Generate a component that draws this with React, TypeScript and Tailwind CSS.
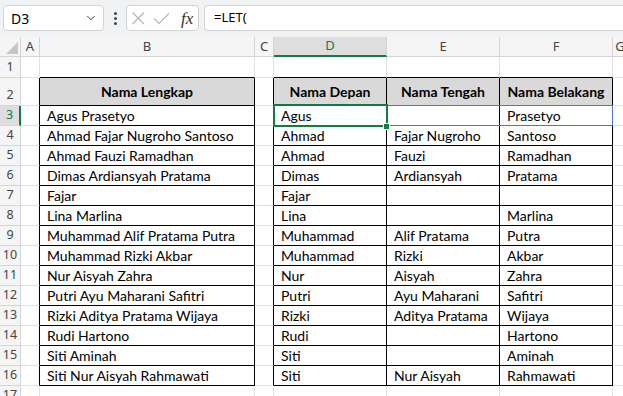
import { ChevronDown } from "lucide-react";

const names = [
  ["Agus Prasetyo", "Agus", "", "Prasetyo"],
  ["Ahmad Fajar Nugroho Santoso", "Ahmad", "Fajar Nugroho", "Santoso"],
  ["Ahmad Fauzi Ramadhan", "Ahmad", "Fauzi", "Ramadhan"],
  ["Dimas Ardiansyah Pratama", "Dimas", "Ardiansyah", "Pratama"],
  ["Fajar", "Fajar", "", ""],
  ["Lina Marlina", "Lina", "", "Marlina"],
  ["Muhammad Alif Pratama Putra", "Muhammad", "Alif Pratama", "Putra"],
  ["Muhammad Rizki Akbar", "Muhammad", "Rizki", "Akbar"],
  ["Nur Aisyah Zahra", "Nur", "Aisyah", "Zahra"],
  ["Putri Ayu Maharani Safitri", "Putri", "Ayu Maharani", "Safitri"],
  ["Rizki Aditya Pratama Wijaya", "Rizki", "Aditya Pratama", "Wijaya"],
  ["Rudi Hartono", "Rudi", "", "Hartono"],
  ["Siti Aminah", "Siti", "", "Aminah"],
  ["Siti Nur Aisyah Rahmawati", "Siti", "Nur Aisyah", "Rahmawati"],
];

const cols = ["A", "B", "C", "D", "E", "F", "G"];

const RowHead = ({ n, active }: { n: number; active?: boolean }) => (
  <div
    className={
      "flex items-end justify-center border-b border-[#d5d5d5] text-[12.5px] leading-none " +
      (active
        ? "bg-[#dedede] text-[#107c41] border-r-2 border-r-[#107c41]"
        : "bg-[#f5f5f5] text-[#444] border-r border-r-[#d5d5d5]")
    }
    style={{ fontFamily: "'Noto Sans', sans-serif" }}
  >
    <span className="pb-[4px]">{n}</span>
  </div>
);

const Cell = ({ children, black, left, center, bold, head }: any) => (
  <div
    className={
      "flex items-center px-[7px] whitespace-nowrap overflow-visible border-r border-b " +
      (black ? "border-black " : "border-[#e1e1e1] ") +
      (left ? "!border-r-black " : "") +
      (center ? "justify-center " : "") +
      (bold ? "font-bold " : "") +
      (head ? "bg-[#d9d9d9] " : "bg-white ")
    }
  >
    {children}
  </div>
);

export default function App() {
  return (
    <div
      className="w-[623px] h-[396px] overflow-hidden bg-white text-black"
      style={{ fontFamily: "Lato, 'Noto Sans', sans-serif" }}
    >
      {/* formula bar */}
      <div className="h-[37px] bg-[#f0f2f4] flex items-start pt-[5px] pl-[3px]">
        <div className="w-[101px] h-[26px] bg-white border border-[#d3d3d3] rounded-[4px] flex items-center justify-between pl-[7px] pr-[5px]">
          <span className="text-[14px]" style={{ fontFamily: "'Noto Sans', sans-serif" }}>D3</span>
          <ChevronDown size={14} strokeWidth={1.5} className="text-[#333]" />
        </div>
        <div className="w-[22px] h-[26px] flex flex-col items-center justify-center gap-[2px]">
          <span className="w-[3px] h-[3px] rounded-full bg-[#444]" />
          <span className="w-[3px] h-[3px] rounded-full bg-[#444]" />
          <span className="w-[3px] h-[3px] rounded-full bg-[#444]" />
        </div>
        <div className="w-[73px] h-[26px] bg-white border border-[#d3d3d3] rounded-[4px] flex items-center">
          <svg width="48" height="24" viewBox="0 0 48 24" className="shrink-0">
            <path d="M5.5 6.5 L17 18 M17 6.5 L5.5 18" stroke="#b5b5b5" strokeWidth="1.1" fill="none" />
            <path d="M27 12.5 L32 17.5 L42 7.5" stroke="#b5b5b5" strokeWidth="1.1" fill="none" />
          </svg>
          <span className="italic text-[17px] text-[#333] ml-[6px] leading-none" style={{ fontFamily: "'Liberation Serif', serif" }}>
            fx
          </span>
        </div>
        <div className="ml-[5px] flex-1 h-[26px] bg-white border border-[#d3d3d3] rounded-l-[4px] border-r-0 flex items-center pl-[9px]">
          <span className="text-[13px]" style={{ fontFamily: "'Noto Sans', sans-serif" }}>=LET(</span>
        </div>
      </div>

      {/* grid */}
      <div className="relative grid grid-cols-[21px_19px_215px_19px_113px_113px_113px_1fr] grid-rows-[20px_21px_28px_repeat(14,20px)_20px] text-[14px]">
        {/* column header */}
        <div className="bg-[#f5f5f5] border-r border-b border-[#d5d5d5] relative">
          <div className="absolute right-[2px] bottom-[2px] w-0 h-0 border-l-[12px] border-l-transparent border-b-[12px] border-b-[#c6c6c6]" />
        </div>
        {cols.map((c) => (
          <div
            key={c}
            className={
              "flex items-center justify-center text-[13px] border-r border-[#d5d5d5] " +
              (c === "D"
                ? "bg-[#dedede] text-[#107c41] border-b-2 border-b-[#107c41]"
                : "bg-[#f5f5f5] text-[#444] border-b")
            }
            style={{ fontFamily: "'Noto Sans', sans-serif" }}
          >
            {c}
          </div>
        ))}

        {/* row 1 */}
        <RowHead n={1} />
        <Cell />
        <div className="border-r border-[#e1e1e1] border-b border-b-black" />
        <Cell />
        <div className="border-r border-[#e1e1e1] border-b border-b-black" />
        <div className="border-r border-[#e1e1e1] border-b border-b-black" />
        <div className="border-r border-[#e1e1e1] border-b border-b-black" />
        <Cell />

        {/* row 2 */}
        <RowHead n={2} />
        <Cell left />
        <Cell black center bold head>Nama Lengkap</Cell>
        <Cell left />
        <Cell black center bold head>Nama Depan</Cell>
        <Cell black center bold head>Nama Tengah</Cell>
        <Cell black center bold head>Nama Belakang</Cell>
        <Cell />

        {names.map((r, i) => (
          <div key={i} className="contents">
            <RowHead n={i + 3} active={i === 0} />
            <Cell left />
            <Cell black>{r[0]}</Cell>
            <Cell left />
            <Cell black>{r[1]}</Cell>
            <Cell black>{r[2]}</Cell>
            <Cell black>{r[3]}</Cell>
            <Cell />
          </div>
        ))}

        {/* row 17 */}
        <RowHead n={17} />
        <Cell />
        <Cell />
        <Cell />
        <Cell />
        <Cell />
        <Cell />
        <Cell />

        {/* spill range */}
        <div className="absolute left-[273px] top-[68px] w-[340px] h-[21px] border border-[#4a78c8] pointer-events-none" />
        {/* active cell */}
        <div className="absolute left-[273px] top-[67px] w-[115px] h-[23px] border-2 border-[#107c41] pointer-events-none" />
        <div className="absolute left-[383px] top-[86px] w-[7px] h-[7px] bg-[#107c41] border border-white" />
      </div>
    </div>
  );
}
